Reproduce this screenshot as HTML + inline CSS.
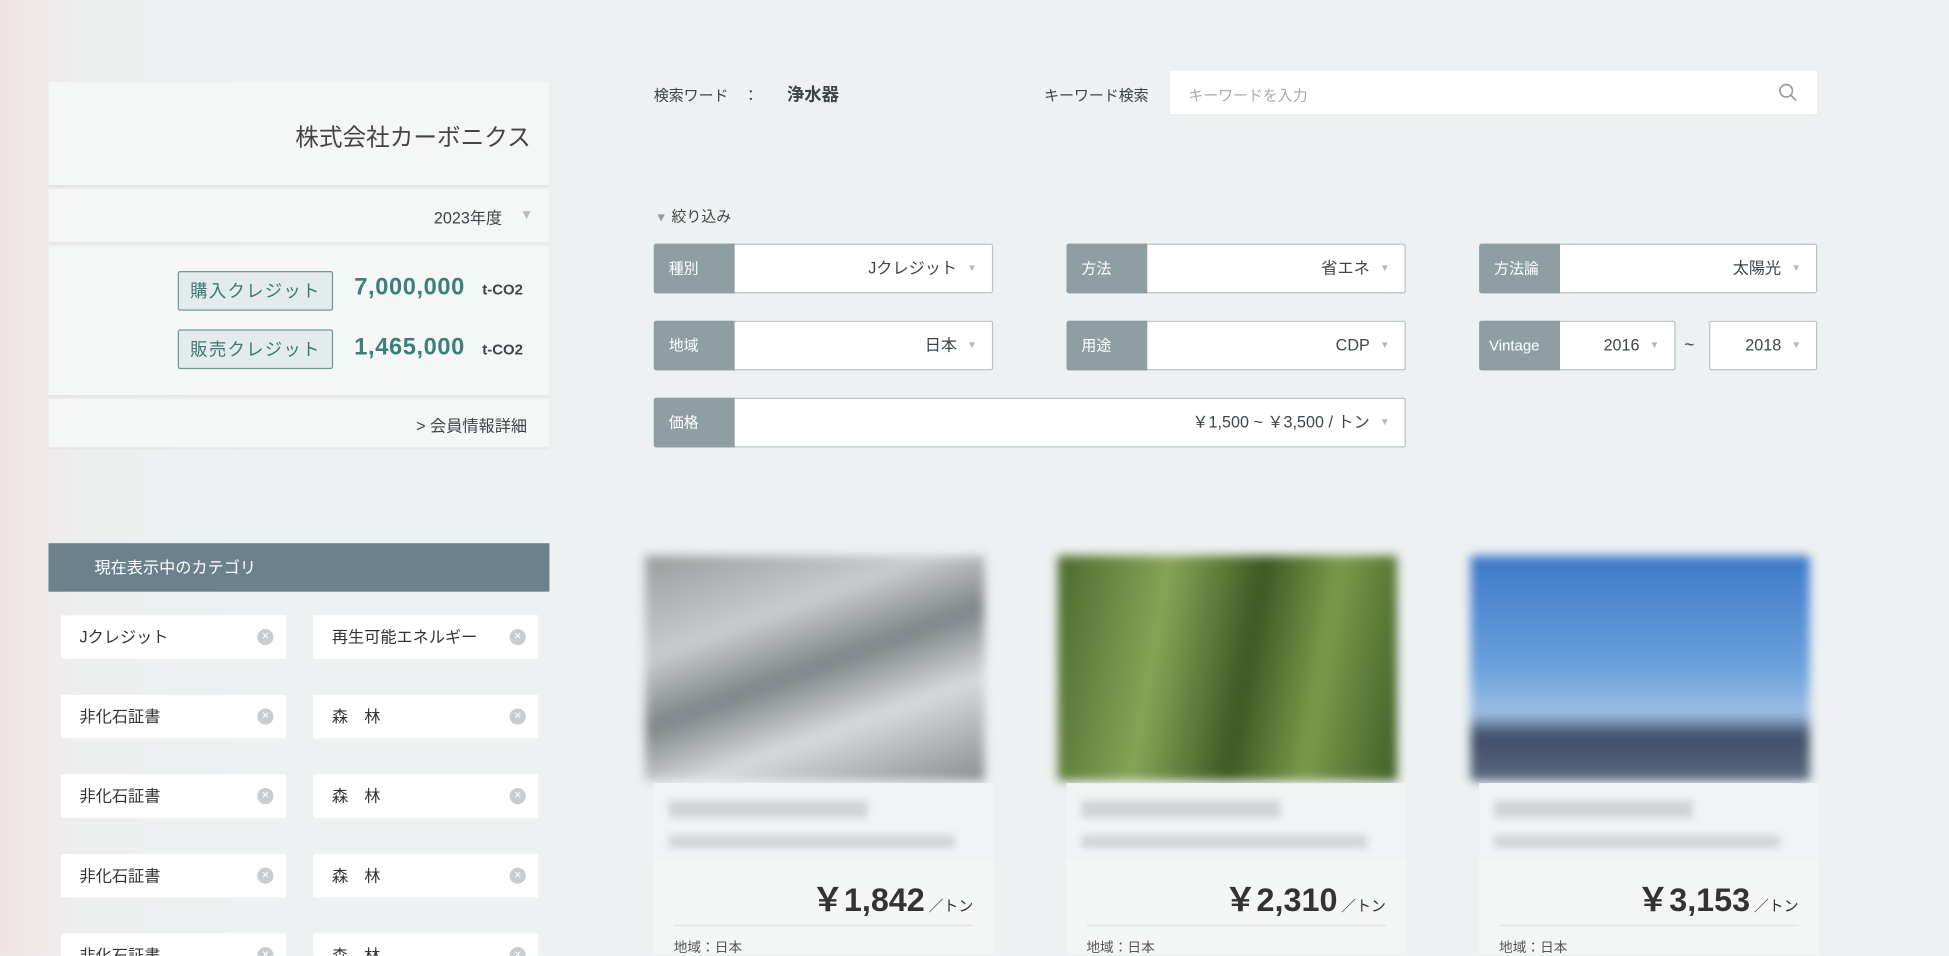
<!DOCTYPE html>
<html><head><meta charset="utf-8"><style>
*{margin:0;padding:0;box-sizing:border-box}
html,body{width:1949px;height:955px;overflow:hidden;background:#edf1f2}
#s{position:absolute;left:0;top:0;width:1568px;height:769px;transform:scale(1.243);transform-origin:0 0;overflow:hidden;
background:linear-gradient(90deg,#efe4e3 0,#edeeee 60px,#edf1f2 200px);font-family:"Liberation Sans","Noto Sans CJK JP",sans-serif;color:#3d4548}
.a{position:absolute}
.card{background:#f5f6f6;box-shadow:0 1px 2px rgba(0,0,0,.08)}
.chip{position:absolute;width:181px;height:35px;background:#fff;font-size:13px;line-height:35px;padding-left:15px;color:#333}
.chip i{position:absolute;right:10px;top:11px;width:13px;height:13px;border-radius:50%;background:#c9cdcf;color:#fff;font-style:normal;font-size:10px;line-height:13px;text-align:center}
.f{position:absolute;height:40px;background:#fff;border:1px solid #b9c3c6;border-radius:2px;font-size:13px;line-height:38px}
.f b{position:absolute;left:-1px;top:-1px;bottom:-1px;width:65px;background:#8e9ea3;color:#fff;font-weight:normal;line-height:40px;padding-left:12px;font-size:12px;border-radius:2px 0 0 2px}
.f span{position:absolute;right:28px;top:0}
.f em{position:absolute;right:12px;top:0;font-style:normal;font-size:8px;color:#b0b8ba}
.img{position:absolute;width:273px;height:181px;filter:blur(4px)}
.bl{position:absolute;background:#cfd4d6;filter:blur(3px)}
.pc{position:absolute;width:273px;height:76px;top:692px;background:#f4f6f6}
.pr{position:absolute;right:16px;top:12px;font-size:26px;font-weight:bold;color:#333}
.pr small{font-size:12px;font-weight:normal;margin-left:3px}
.ln{position:absolute;left:16px;right:16px;top:52px;border-top:1px solid #e1e4e5}
.rg{position:absolute;left:16px;top:62px;font-size:11px;color:#555}
</style></head><body><div id="s">
<div class="a card" style="left:39px;top:66px;width:403px;height:83px"><div class="a" style="right:15px;top:30px;font-size:19px;color:#444">株式会社カーボニクス</div></div>
<div class="a card" style="left:39px;top:152px;width:403px;height:43px"><div class="a" style="right:38px;top:13px;font-size:13px">2023年度</div><div class="a" style="right:13px;top:15px;font-size:11px;color:#bbb">▼</div></div>
<div class="a card" style="left:39px;top:198px;width:403px;height:120px">
<div class="a" style="left:104px;top:20px;width:125px;height:32px;border:1.5px solid #6e9a98;background:#e3ebeb;border-radius:2px;color:#3d7774;font-size:14px;line-height:30px;text-align:center;letter-spacing:1px">購入クレジット</div>
<div class="a" style="left:246px;top:23px;font-size:19px;font-weight:bold;color:#3d7f7a;letter-spacing:.5px">7,000,000</div>
<div class="a" style="left:349px;top:28px;font-size:12px;font-weight:bold">t-CO2</div>
<div class="a" style="left:104px;top:67px;width:125px;height:32px;border:1.5px solid #6e9a98;background:#e3ebeb;border-radius:2px;color:#3d7774;font-size:14px;line-height:30px;text-align:center;letter-spacing:1px">販売クレジット</div>
<div class="a" style="left:246px;top:71px;font-size:19px;font-weight:bold;color:#3d7f7a;letter-spacing:.5px">1,465,000</div>
<div class="a" style="left:349px;top:76px;font-size:12px;font-weight:bold">t-CO2</div>
</div>
<div class="a card" style="left:39px;top:321px;width:403px;height:39px"><div class="a" style="right:18px;top:11px;font-size:13px">&gt; 会員情報詳細</div></div>
<div class="a" style="left:39px;top:437px;width:403px;height:39px;background:#6b828c;color:#fff;font-size:13px;line-height:39px;padding-left:37px">現在表示中のカテゴリ</div>
<div class="chip" style="left:49px;top:495px">Jクレジット<i>×</i></div>
<div class="chip" style="left:252px;top:495px">再生可能エネルギー<i>×</i></div>
<div class="chip" style="left:49px;top:559px">非化石証書<i>×</i></div>
<div class="chip" style="left:252px;top:559px">森　林<i>×</i></div>
<div class="chip" style="left:49px;top:623px">非化石証書<i>×</i></div>
<div class="chip" style="left:252px;top:623px">森　林<i>×</i></div>
<div class="chip" style="left:49px;top:687px">非化石証書<i>×</i></div>
<div class="chip" style="left:252px;top:687px">森　林<i>×</i></div>
<div class="chip" style="left:49px;top:751px">非化石証書<i>×</i></div>
<div class="chip" style="left:252px;top:751px">森　林<i>×</i></div>

<div class="a" style="left:526px;top:68px;font-size:12px">検索ワード　：</div>
<div class="a" style="left:633px;top:66px;font-size:14px;font-weight:bold">浄水器</div>
<div class="a" style="left:840px;top:68px;font-size:12px">キーワード検索</div>
<div class="a" style="left:941px;top:57px;width:521px;height:35px;background:#fff;box-shadow:0 1px 2px rgba(0,0,0,.06)"><div class="a" style="left:15px;top:11px;font-size:12px;color:#aaa">キーワードを入力</div>
<svg class="a" style="right:16px;top:10px" width="15" height="15" viewBox="0 0 15 15"><circle cx="6" cy="6" r="5" fill="none" stroke="#999" stroke-width="1.3"/><path d="M10 10l4 4" stroke="#999" stroke-width="1.3"/></svg></div>
<div class="a" style="left:527px;top:165px;font-size:12px"><span style="font-size:10px;color:#99a">▼</span> 絞り込み</div>

<div class="f" style="left:526px;top:196px;width:273px"><b>種別</b><span>Jクレジット</span><em>▼</em></div>
<div class="f" style="left:858px;top:196px;width:273px"><b>方法</b><span>省エネ</span><em>▼</em></div>
<div class="f" style="left:1190px;top:196px;width:272px"><b>方法論</b><span>太陽光</span><em>▼</em></div>
<div class="f" style="left:526px;top:258px;width:273px"><b>地域</b><span>日本</span><em>▼</em></div>
<div class="f" style="left:858px;top:258px;width:273px"><b>用途</b><span>CDP</span><em>▼</em></div>
<div class="f" style="left:1190px;top:258px;width:158px"><b style="padding-left:8px">Vintage</b><span>2016</span><em>▼</em></div>
<div class="a" style="left:1355px;top:269px;font-size:14px">~</div>
<div class="f" style="left:1375px;top:258px;width:87px"><span>2018</span><em>▼</em></div>
<div class="f" style="left:526px;top:320px;width:605px"><b>価格</b><span>￥1,500 ~ ￥3,500 / トン</span><em>▼</em></div>

<div class="img" style="left:519px;top:447px;background:linear-gradient(160deg,#9a9c9c,#c8ccce 30%,#7f8588 50%,#d6dadc 70%,#8b8e90)"></div>
<div class="img" style="left:851px;top:447px;background:linear-gradient(100deg,#4c6a2e,#86a456 30%,#3c5a22 55%,#7a9a4a 75%,#3f5f27)"></div>
<div class="img" style="left:1183px;top:447px;background:linear-gradient(180deg,#3d79c9,#6aa0dc 50%,#9cbfe4 70%,#3e4e68 80%,#5a6880)"></div>
<div class="a" style="left:526px;top:630px;width:273px;height:62px;background:#f1f4f5"></div>
<div class="a" style="left:858px;top:630px;width:273px;height:62px;background:#f1f4f5"></div>
<div class="a" style="left:1190px;top:630px;width:273px;height:62px;background:#f1f4f5"></div>
<div class="bl" style="left:538px;top:644px;width:160px;height:14px"></div>
<div class="bl" style="left:538px;top:672px;width:230px;height:10px"></div>
<div class="bl" style="left:870px;top:644px;width:160px;height:14px"></div>
<div class="bl" style="left:870px;top:672px;width:230px;height:10px"></div>
<div class="bl" style="left:1202px;top:644px;width:160px;height:14px"></div>
<div class="bl" style="left:1202px;top:672px;width:230px;height:10px"></div>
<div class="pc" style="left:526px"><div class="pr">￥1,842<small>／トン</small></div><div class="ln"></div><div class="rg">地域：日本</div></div>
<div class="pc" style="left:858px"><div class="pr">￥2,310<small>／トン</small></div><div class="ln"></div><div class="rg">地域：日本</div></div>
<div class="pc" style="left:1190px"><div class="pr">￥3,153<small>／トン</small></div><div class="ln"></div><div class="rg">地域：日本</div></div>
</div></body></html>
